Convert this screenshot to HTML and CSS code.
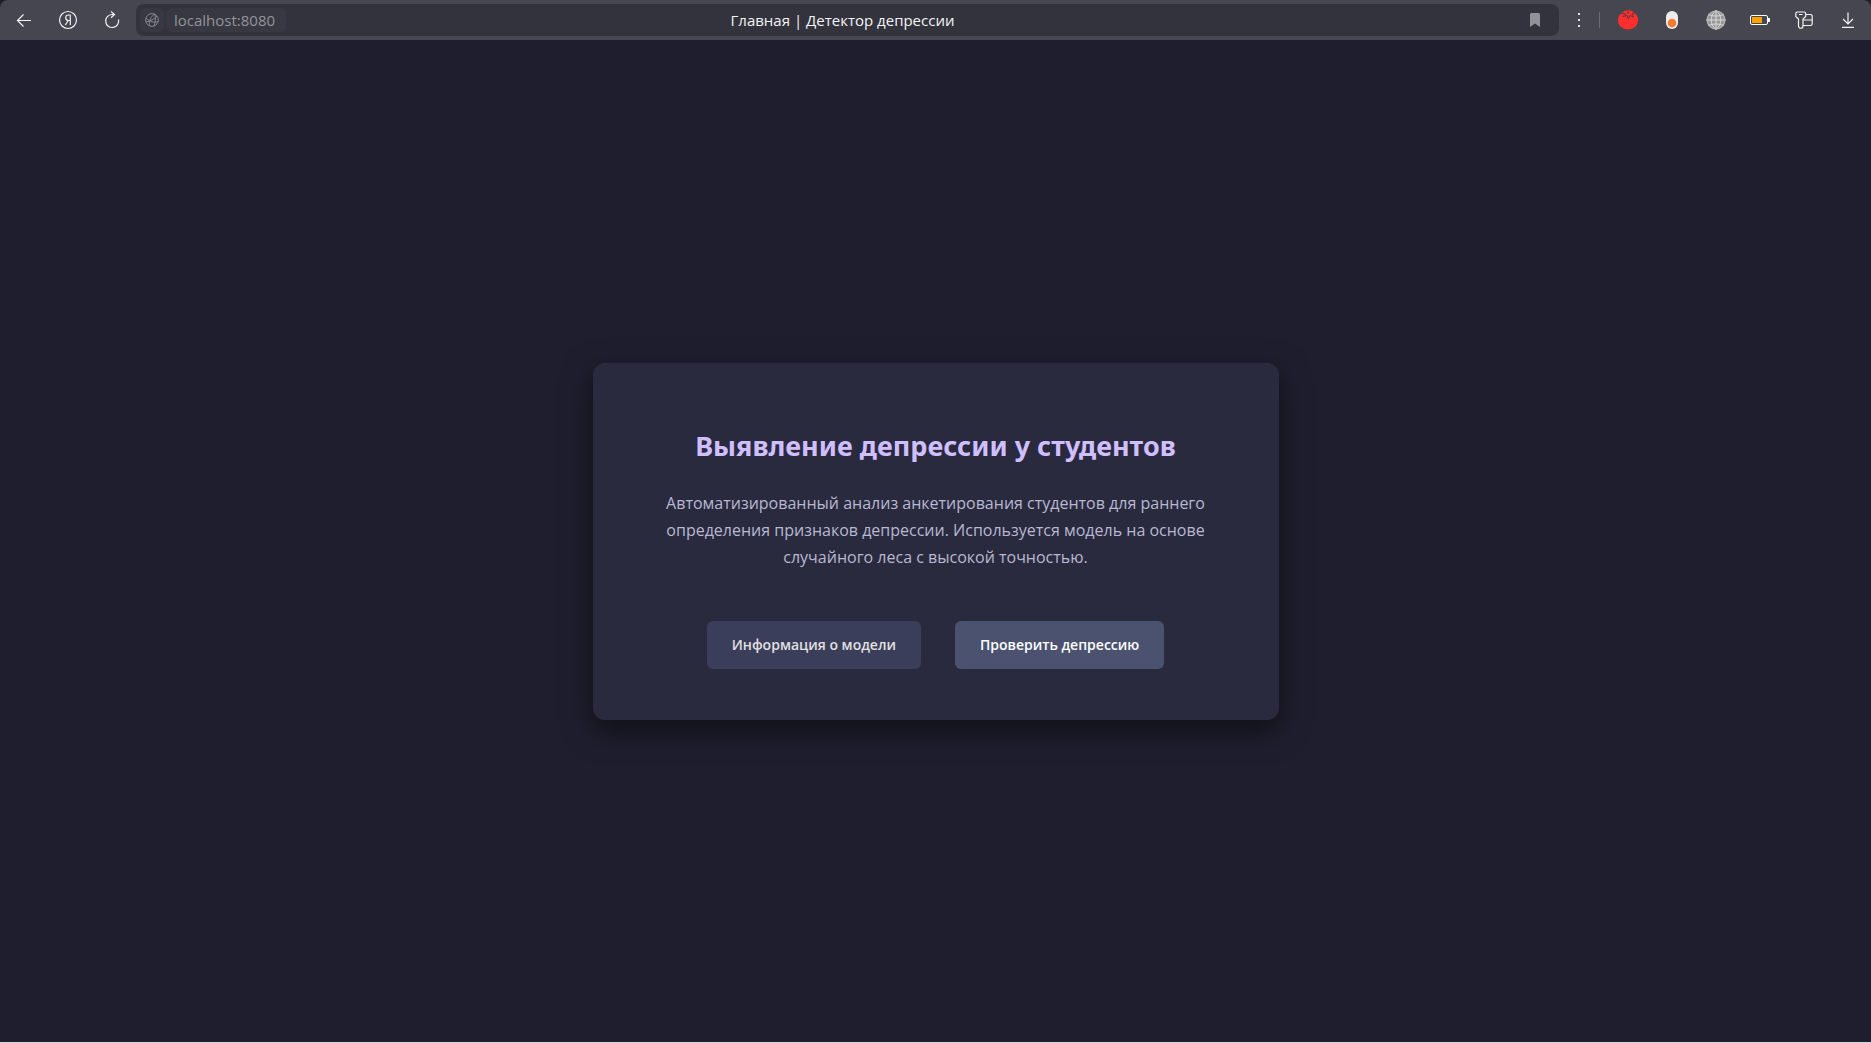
FILE: index.html
```html
<!DOCTYPE html>
<html lang="ru">
<head>
<meta charset="utf-8">
<meta name="viewport" content="width=device-width, initial-scale=1">
<title>Главная | Детектор депрессии</title>
<link rel="stylesheet" href="styles.css">
</head>
<body>
<header class="toolbar">
  <nav class="tools" aria-label="Навигация">
    <button class="tool" type="button" aria-label="Назад">
      <svg width="16" height="14" viewBox="0 0 16 14" class="line"><path d="M15 7.500H1.500M7.500 1.500L1.500 7.500l6 6"/></svg>
    </button>
    <button class="tool" type="button" aria-label="Яндекс">
      <svg width="20" height="20" viewBox="0 0 20 20" class="line"><circle cx="10" cy="10" r="8.500"/><path d="M12.300 15V5h-1.800a2.700 2.700 0 0 0 0 5.500h1.800M10.300 10.500L7.300 15"/></svg>
    </button>
    <button class="tool" type="button" aria-label="Обновить">
      <svg width="18" height="18" viewBox="0 0 18 18" class="line"><path d="M15.500 8.500A6.500 6.500 0 1 1 9 3.500h2.500M8 0.500l3.500 3L8 6.800"/></svg>
    </button>
  </nav>
  <div class="address">
    <button class="site" type="button" aria-label="Сведения о сайте">
      <svg width="14" height="14" viewBox="0 0 14 14" class="line"><circle cx="7" cy="7" r="6.400"/><path d="M9.500 1C5.500 4 4 8 4.300 12.800M1 5C5 9 9 10 13 8.500M12 3C9.500 6 5 8.500 1 9M9.500 1C11 5 10.500 9 9 13"/></svg>
    </button>
    <input class="url" type="text" value="localhost:8080" aria-label="Адрес">
    <span class="page-title">Главная | Детектор депрессии</span>
    <span class="address-end">
      <button class="bookmark" type="button" aria-label="В закладки">
        <svg width="10" height="14" viewBox="0 0 10 14"><path fill="#919197" d="M1.500 0h7A1.500 1.500 0 0 1 10 1.500V14L5 10.500 0 14V1.500A1.500 1.500 0 0 1 1.500 0z"/></svg>
      </button>
    </span>
  </div>
  <button class="more" type="button" aria-label="Меню">
    <svg width="4" height="14" viewBox="0 0 4 14" fill="#dededf"><path d="M1 0h2v2H1zM1 6h2v2H1zM1 12h2v2H1z"/></svg>
  </button>
  <div class="tools extensions">
    <button class="tool" type="button" aria-label="Помидор">
      <svg width="20" height="20" viewBox="0 0 20 20"><path fill="#ff2f2e" d="M5 2.200C8-.3 12.500-.3 15.300 2.200 18.500 4 20 6.500 20 10c0 6-4.500 9.500-10 9.500S0 16 0 10c0-3.500 1.700-6 5-7.800z"/><path fill="none" stroke="#633541" stroke-width="1" d="M3.500 3.200l4 .8-2.500 2.600 4.200-1.200L10.500 9l1.300-3.600L15.500 7l-1.500-3 2.500-1M10 4V0.500"/></svg>
    </button>
    <button class="tool" type="button" aria-label="Переключатель">
      <svg width="12" height="18" viewBox="0 0 12 18"><rect width="12" height="18" rx="6" fill="#ececec"/><circle cx="6" cy="12" r="4.300" fill="#f37b30"/></svg>
    </button>
    <button class="tool" type="button" aria-label="Язык">
      <svg width="20" height="20" viewBox="0 0 20 20"><circle cx="10" cy="10" r="9.500" fill="#979797"/><path fill="none" stroke="#d9d9d9" d="M10 .5v19M.5 10h19M2.500 4.500c4 2 11 2 15 0M2.500 15.500c4-2 11-2 15 0M10 .5c-6.500 5-6.500 14 0 19M10 .5c6.500 5 6.500 14 0 19"/><circle cx="10" cy="10" r="9" fill="none" stroke="#bcbcbc"/></svg>
    </button>
    <button class="tool" type="button" aria-label="Батарея">
      <svg width="20" height="10" viewBox="0 0 20 10"><rect x=".5" y=".5" width="17" height="9" rx="1.500" fill="none" stroke="#fff"/><path fill="#fff" d="M18 3h1a1 1 0 0 1 1 1v2a1 1 0 0 1-1 1h-1z"/><path fill="#ffa200" d="M2 2h10v6H2z"/></svg>
    </button>
    <button class="tool" type="button" aria-label="Пароли">
      <svg width="18" height="18" viewBox="0 0 18 18" class="line"><path d="M2.500 1H9a1.700 1.700 0 0 1 1.700 1.700V5.500L8 8v7a2 2 0 0 1-4.500 0V8L.8 5.500V2.700A1.700 1.700 0 0 1 2.500 1zM4 3.500h3.500M11 3.500h4.500a1.700 1.700 0 0 1 1.700 1.700v7.600a1.700 1.700 0 0 1-1.700 1.700H8.500M8.500 9H17"/></svg>
    </button>
    <button class="tool" type="button" aria-label="Загрузки">
      <svg width="14" height="16" viewBox="0 0 14 16" class="line"><path d="M7 0.500v11.500M2 7l5 5 5-5M1 15.400h12"/></svg>
    </button>
  </div>
</header>
<main class="page">
  <section class="card">
    <h1 class="heading">Выявление депрессии у студентов</h1>
    <p class="lead">Автоматизированный анализ анкетирования студентов для раннего определения признаков депрессии. Используется модель на основе случайного леса с высокой точностью.</p>
    <div class="actions">
      <a class="btn" href="#model">Информация о модели</a>
      <a class="btn btn-primary" href="#check">Проверить депрессию</a>
    </div>
  </section>
</main>
</body>
</html>
```
FILE: styles.css
```css
* {
  box-sizing: border-box;
}

body {
  margin: 0;
  min-height: 100vh;
  display: flex;
  flex-direction: column;
  background: #1e1e2e;
  border-bottom: 1px solid #d4d4dc;
  font-family: "Open Sans", "Noto Sans", sans-serif;
}

button {
  display: flex;
  align-items: center;
  justify-content: center;
  padding: 0;
  border: 0;
  background: none;
}

.line {
  fill: none;
  stroke: #f2f2f3;
  stroke-width: 1.2;
}

.toolbar {
  display: flex;
  align-items: center;
  height: 40px;
  padding: 0 1px 0 2px;
  border-radius: 8px 8px 0 0;
  background: #464650;
}

.tools {
  display: flex;
}

.tool {
  width: 44px;
  height: 40px;
}

.address {
  flex: 1;
  display: flex;
  align-items: center;
  height: 32px;
  margin-left: 2px;
  padding-left: 4px;
  border-radius: 8px;
  background: #33333d;
}

.site {
  width: 24px;
  height: 24px;
  border-radius: 6px;
  background: #373841;
}

.site .line {
  stroke: #85868d;
  stroke-width: 1;
}

.url {
  width: 120px;
  height: 24px;
  margin-left: 2px;
  padding: 0 8px;
  border: 0;
  border-radius: 6px;
  background: #373841;
  color: #94949a;
  font: 15px "Open Sans", "Noto Sans", sans-serif;
}

.page-title {
  flex: 1;
  color: #f4f4f5;
  font-size: 15px;
  line-height: 24px;
  text-align: center;
}

.address-end {
  display: flex;
  justify-content: flex-end;
  width: 160px;
  padding-right: 12px;
}

.bookmark {
  width: 24px;
  height: 24px;
}

.more {
  width: 40px;
  height: 40px;
}

.extensions {
  align-items: center;
}

.extensions::before {
  content: "";
  width: 1px;
  height: 16px;
  margin-right: 6px;
  background: #6b6b73;
}

.page {
  flex: 1;
  display: flex;
  align-items: center;
  justify-content: center;
}

.card {
  width: 100%;
  max-width: 686px;
  padding: 64px 64px 51px;
  border-radius: 12px;
  background: #2a2a3f;
  box-shadow: 0 10px 30px rgba(0, 0, 0, 0.5);
  text-align: center;
}

.heading {
  margin: 0 0 25px;
  color: #d0bfff;
  font-family: "Noto Sans", "Open Sans", sans-serif;
  font-size: 27px;
  font-weight: 700;
  line-height: 38px;
}

.lead {
  margin: 0 0 50px;
  color: #b8b8d1;
  font-size: 16px;
  line-height: 27px;
}

.actions {
  display: flex;
  flex-wrap: wrap;
  justify-content: center;
  gap: 34px;
}

.btn {
  padding: 13px 25px;
  border-radius: 6px;
  background: #3b3e5b;
  color: #e0e0e0;
  font-size: 14px;
  font-weight: 600;
  line-height: 22px;
  text-decoration: none;
}

.btn-primary {
  background: #4a5270;
  color: #ffffff;
}
```
